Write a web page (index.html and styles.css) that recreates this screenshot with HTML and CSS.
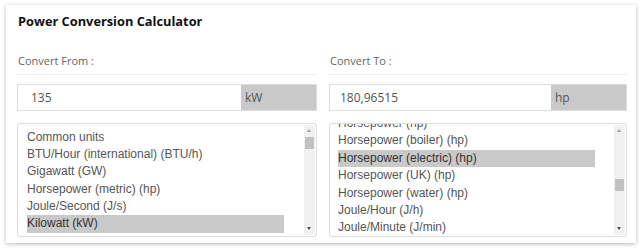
FILE: index.html
```html
<!DOCTYPE html>
<html lang="en">
<head>
  <meta charset="UTF-8" />
  <meta name="viewport" content="width=device-width, initial-scale=1.0" />
  <title>Power Conversion Calculator</title>
  <link rel="stylesheet" href="styles.css">
</head>
<body>

  <div class="card">
    <div class="title">Power Conversion Calculator</div>

    <div class="columns">
      <div class="col">
        <div class="label">Convert From :</div>
        <div class="field">
          <div class="value">135</div>
          <div class="unit">kW</div>
        </div>
        <div class="listbox">
          <div class="list-view">
            <div class="items items-from">
              <div class="item">Common units</div>
              <div class="item">BTU/Hour (international) (BTU/h)</div>
              <div class="item">Gigawatt (GW)</div>
              <div class="item">Horsepower (metric) (hp)</div>
              <div class="item">Joule/Second (J/s)</div>
              <div class="item selected">Kilowatt (kW)</div>
              <div class="item">Watt (W)</div>
            </div>
          </div>
          <div class="scrollbar">
            <div class="arrow up"></div>
            <div class="track">
              <div class="thumb thumb-from"></div>
            </div>
            <div class="arrow down"></div>
          </div>
        </div>
      </div>

      <div class="col">
        <div class="label">Convert To :</div>
        <div class="field">
          <div class="value">180,96515</div>
          <div class="unit">hp</div>
        </div>
        <div class="listbox">
          <div class="list-view">
            <div class="items items-to">
              <div class="item">Horsepower (hp)</div>
              <div class="item">Horsepower (boiler) (hp)</div>
              <div class="item selected">Horsepower (electric) (hp)</div>
              <div class="item">Horsepower (UK) (hp)</div>
              <div class="item">Horsepower (water) (hp)</div>
              <div class="item">Joule/Hour (J/h)</div>
              <div class="item">Joule/Minute (J/min)</div>
            </div>
          </div>
          <div class="scrollbar">
            <div class="arrow up"></div>
            <div class="track">
              <div class="thumb thumb-to"></div>
            </div>
            <div class="arrow down"></div>
          </div>
        </div>
      </div>
    </div>
  </div>

</body>
</html>
```

FILE: styles.css
```css
* {
  box-sizing: border-box;
}

body {
  font-family: "Open Sans", "Noto Sans", Arial, sans-serif;
  margin: 0;
  padding: 5px 6px;
  background: #fff;
  color: #222;
}

.card {
  width: 630px;
  padding: 6px 9px 6px 11px;
  background: #fff;
  box-shadow: 0 1px 4px rgba(0, 0, 0, 0.28);
}

.title {
  font-size: 12.8px;
  font-weight: 700;
  line-height: 20px;
  color: #111;
  margin-left: 1px;
  margin-bottom: 22px;
}

.columns {
  display: grid;
  grid-template-columns: 300px 298px;
  gap: 12px;
}

.label {
  font-size: 11px;
  line-height: 16px;
  color: #666;
  padding: 0 0 5px 1px;
  border-bottom: 1px solid #eee;
  margin-bottom: 9px;
}

.field {
  display: flex;
  height: 27px;
  border: 1px solid #ddd;
  margin-bottom: 12px;
  font-size: 12px;
  color: #555;
}

.value {
  flex: 1;
  padding-left: 13px;
  line-height: 25px;
}

.col + .col .value {
  padding-left: 10px;
}

.unit {
  width: 75px;
  background: #c9c9c9;
  padding-left: 4px;
  line-height: 25px;
}

.listbox {
  display: flex;
  height: 114px;
  border: 1px solid #ddd;
  border-radius: 3px;
}

.list-view {
  flex: 1;
  overflow: hidden;
  padding-left: 9px;
}

.items {
  font-family: "Liberation Sans", Arial, sans-serif;
  font-size: 12px;
  color: #555;
}

.items-from {
  margin-top: 4.5px;
}

.items-to {
  margin-top: -9px;
}

.col + .col .list-view {
  padding-left: 8px;
}

.item {
  width: 257px;
  height: 17.4px;
  line-height: 17.4px;
  white-space: nowrap;
}

.item.selected {
  background: #c9c9c9;
  color: #333;
}

.scrollbar {
  width: 11px;
  margin: 1px 1px 1px 0;
  display: flex;
  flex-direction: column;
  background: #f1f1f1;
}

.arrow {
  height: 12px;
  position: relative;
}

.arrow::after {
  content: "";
  position: absolute;
  left: 3px;
  top: 4px;
  border-left: 2.5px solid transparent;
  border-right: 2.5px solid transparent;
}

.arrow.up::after {
  border-bottom: 3px solid #a0a0a0;
}

.arrow.down::after {
  border-top: 3px solid #505050;
}

.track {
  flex: 1;
  padding: 0 1px;
}

.thumb {
  height: 12px;
  background: #c1c1c1;
}

.thumb-from {
  margin-top: 0;
}

.thumb-to {
  margin-top: 42px;
}
```
